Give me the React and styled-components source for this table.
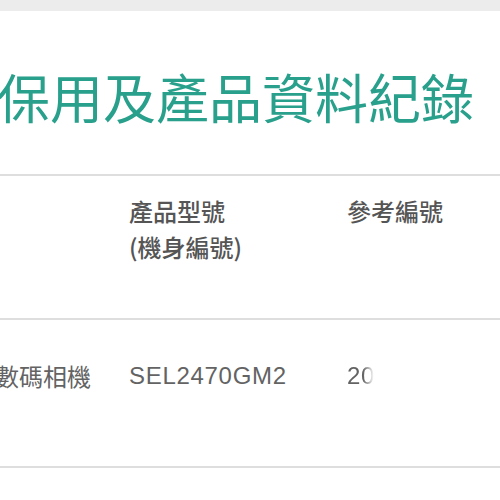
import React from "react";
import styled, { createGlobalStyle } from "styled-components";

const Global = createGlobalStyle`
  html, body { margin: 0; padding: 0; background: #ffffff; }
  body { font-family: "Noto Sans CJK TC", "Noto Sans", sans-serif; overflow: hidden; }
`;

const Page = styled.div`
  width: 500px;
  height: 500px;
  overflow: hidden;
  background: #fff;
`;

const TopBar = styled.div`
  height: 11px;
  background: #ececec;
`;

const TitleSection = styled.div`
  height: 165px;
  padding-top: 54px;
  box-sizing: border-box;
  border-bottom: 2px solid #dedede;
`;

const Title = styled.h1`
  margin: 0 0 0 -3px;
  font-family: "Noto Sans CJK TC", sans-serif;
  font-weight: 400;
  font-size: 53px;
  line-height: 62px;
  color: #28a08c;
  white-space: nowrap;
`;

const Row = styled.div`
  display: grid;
  grid-template-columns: 134px 218px 1fr;
  margin-left: -5px;
  height: ${(p) => p.$height}px;
  padding-top: ${(p) => p.$pad}px;
  box-sizing: border-box;
  border-bottom: 2px solid #dedede;
`;

const Cell = styled.div`
  font-family: ${(p) =>
    p.$latin
      ? '"Liberation Sans", Arial, sans-serif'
      : '"Noto Sans CJK TC", sans-serif'};
  font-size: 24px;
  letter-spacing: ${(p) => (p.$latin ? "0.7px" : "0")};
  line-height: 36px;
  font-weight: ${(p) => (p.$head ? 500 : 400)};
  color: ${(p) => (p.$head ? "#555555" : "#636363")};
  white-space: nowrap;
`;

const Clipped = styled.span`
  display: inline-block;
  width: 27px;
  overflow: hidden;
  vertical-align: top;
  -webkit-mask-image: linear-gradient(to right, #000 60%, transparent 100%);
  mask-image: linear-gradient(to right, #000 60%, transparent 100%);
`;

export default function App() {
  return (
    <Page>
      <Global />
      <TopBar />
      <TitleSection>
        <Title>保用及產品資料紀錄</Title>
      </TitleSection>
      <Row $height={144} $pad={17}>
        <Cell $head />
        <Cell $head>
          產品型號
          <br />
          (機身編號)
        </Cell>
        <Cell $head>參考編號</Cell>
      </Row>
      <Row $height={148} $pad={38}>
        <Cell>數碼相機</Cell>
        <Cell $latin>SEL2470GM2</Cell>
        <Cell $latin>
          <Clipped>20</Clipped>
        </Cell>
      </Row>
    </Page>
  );
}
